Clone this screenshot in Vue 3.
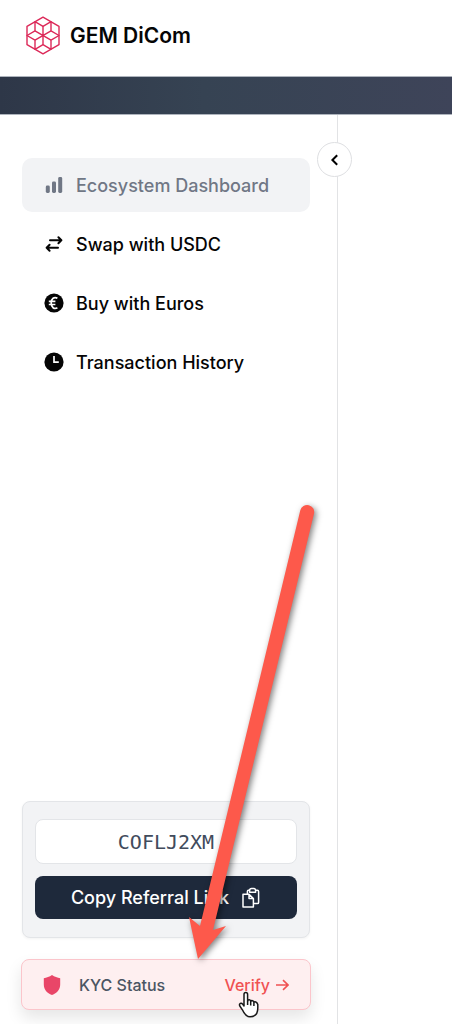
<script setup>
import { ref } from 'vue'

const code = ref('COFLJ2XM')
const collapsed = ref(false)

const items = [
  { label: 'Ecosystem Dashboard', icon: 'bars', active: true },
  { label: 'Swap with USDC', icon: 'swap' },
  { label: 'Buy with Euros', icon: 'euro' },
  { label: 'Transaction History', icon: 'clock' },
]

function copyLink() {
  navigator.clipboard?.writeText(code.value)
}
</script>

<template>
  <div class="page">
    <header class="header">
      <svg class="logo" viewBox="-17 -19.5 34 39" aria-hidden="true">
        <path d="M0-18.4 16-9.2V9.2L0 18.4-16 9.2V-9.2Z" />
        <path d="M0-9.2V9.2M-8-4.6 8 4.6M8-4.6-8 4.6" />
        <path d="M-8-13.8 0-9.2 8-13.8V-4.6L16 0 8 4.6V13.8L0 9.2-8 13.8V4.6L-16 0-8-4.6Z" />
      </svg>
      <h1 class="brand">GEM DiCom</h1>
    </header>
    <div class="banner"></div>

    <div class="body">
      <aside class="sidebar">
        <button
          class="toggle"
          type="button"
          aria-label="Collapse sidebar"
          :aria-expanded="!collapsed"
          @click="collapsed = !collapsed"
        >
          <svg viewBox="0 0 12 12" aria-hidden="true"><path d="M8.2 1.2 3.4 6l4.8 4.8" /></svg>
        </button>

        <nav class="nav">
          <a
            v-for="item in items"
            :key="item.label"
            href="#"
            class="nav-item"
            :class="{ active: item.active }"
          >
            <svg v-if="item.icon === 'bars'" viewBox="0 0 20 20" aria-hidden="true">
              <rect x="1.8" y="10.6" width="4" height="7.4" rx="1.4" />
              <rect x="8" y="6.6" width="4" height="11.4" rx="1.4" />
              <rect x="14.2" y="2" width="4" height="16" rx="1.4" />
            </svg>
            <svg v-else-if="item.icon === 'swap'" class="line" viewBox="0 0 20 20" aria-hidden="true">
              <path d="M6 6.2H17.4M14.4 3.2 17.4 6.2 14.4 9.2M14 13.8H2.6M5.6 10.8 2.6 13.8 5.6 16.8" />
            </svg>
            <svg v-else-if="item.icon === 'euro'" viewBox="0 0 20 20" aria-hidden="true">
              <circle cx="10" cy="10" r="9.6" />
              <path class="cut" d="M13.4 5.2C10.2 3.4 7.2 5.6 7.2 10s3 6.6 6.2 4.8M4.8 8.4H11.4M4.8 11.5H11.4" />
            </svg>
            <svg v-else viewBox="0 0 20 20" aria-hidden="true">
              <circle cx="10" cy="10" r="9.6" />
              <path class="cut" d="M10 4V10.2H14.8" />
            </svg>
            <span>{{ item.label }}</span>
          </a>
        </nav>

        <div class="bottom">
          <section class="referral">
            <input class="code" v-model="code" aria-label="Referral code" readonly />
            <button class="copy" type="button" @click="copyLink">
              Copy Referral Link
              <svg viewBox="0 0 20 22" aria-hidden="true">
                <path d="M2 7.2H8L12.4 11.6V20H2ZM8 7.2V11.6H12.4" />
                <path d="M6.4 7V4.2Q6.4 3.2 7.4 3.2H8.6M14.6 3.2H16.4Q17.6 3.2 17.6 4.4V15.4Q17.6 16.6 16.4 16.6H12.6" />
                <path d="M8.6 5.2V3.6Q8.6 1.6 10.6 1.6H12.6Q14.6 1.6 14.6 3.6V5.2Z" />
              </svg>
            </button>
          </section>

          <section class="kyc">
            <svg class="shield" viewBox="0 0 18 20" aria-hidden="true">
              <path d="M9 0C11.5 1.8 14.5 2.6 17.2 3.2V9.5C17.2 14.5 14 18.3 9 20 4 18.3.8 14.5.8 9.5V3.2C3.5 2.6 6.5 1.8 9 0Z" />
            </svg>
            <span class="kyc-label">KYC Status</span>
            <a class="verify" href="#">
              Verify
              <svg viewBox="0 0 14 14" aria-hidden="true"><path d="M1 7H13M8 2.2 13 7 8 11.8" /></svg>
            </a>
          </section>

          <svg class="pointer-arrow" viewBox="0 0 150 470" aria-hidden="true">
            <path d="M120.3 18.3A7 7 0 0 1 134 21.7L33 438 46 434 18 467 9 425 20 434Z" />
          </svg>
          <svg class="hand" viewBox="0 0 22 28" aria-hidden="true">
            <path d="M6 15V3.4Q6 1.4 7.8 1.4T9.6 3.4V10Q10 8.6 11.3 8.8T12.7 10.4Q13.2 9.4 14.5 9.7T15.9 11.3Q16.5 10.6 17.8 11T19.8 13.4V17Q19.8 25.8 12 25.8C8 25.8 6 22.4 4.4 18.8L1.8 15Q1 13.4 2.2 12.5 3.6 11.8 4.8 13.4Z" />
            <path d="M9.6 10V14M12.7 10.4V14.4M15.9 11.3V15" />
          </svg>
        </div>
      </aside>
      <main class="content"></main>
    </div>
  </div>
</template>

<style>
body {
  margin: 0;
  background: #fff;
}
</style>

<style scoped>
.page {
  display: flex;
  flex-direction: column;
  box-sizing: border-box;
  min-height: 100vh;
  font-family: Inter, "Liberation Sans", sans-serif;
  color: #050505;
}

.header {
  display: flex;
  align-items: center;
  gap: 10px;
  padding: 16px 26px 21px;
}

.logo {
  width: 34px;
  height: 39px;
  fill: none;
  stroke: #dc2858;
  stroke-width: 1.4;
  stroke-linejoin: round;
}

.brand {
  margin: 0;
  font-size: 21px;
  line-height: 33px;
  font-weight: 600;
}

.banner {
  box-sizing: border-box;
  height: 39px;
  border-top: 1px solid #aeb4bd;
  border-bottom: 1px solid #aeb4bd;
  background: linear-gradient(90deg, #2e3748, #364353 45%, #3e4459);
}

.body {
  display: flex;
  flex: 1;
}

.sidebar {
  position: relative;
  display: flex;
  flex-direction: column;
  justify-content: space-between;
  box-sizing: border-box;
  width: 338px;
  padding: 43px 27px 14px 22px;
  border-right: 1px solid #e2e3e5;
}

.toggle {
  position: absolute;
  top: 27px;
  right: -15px;
  display: grid;
  place-items: center;
  width: 35px;
  height: 35px;
  padding: 0;
  border: 1px solid #dedfe2;
  border-radius: 50%;
  background: #fff;
}

.toggle svg {
  width: 12px;
  height: 12px;
  fill: none;
  stroke: #000;
  stroke-width: 2;
}

.nav {
  display: flex;
  flex-direction: column;
  gap: 5px;
}

.nav-item {
  display: flex;
  align-items: center;
  gap: 12px;
  height: 54px;
  padding: 0 22px;
  border-radius: 10px;
  color: #050505;
  font-size: 18px;
  font-weight: 500;
  white-space: nowrap;
  text-decoration: none;
}

.nav-item.active {
  background: #f2f3f5;
  color: #707785;
}

.nav-item svg {
  width: 20px;
  height: 20px;
  fill: currentColor;
}

.nav-item .line {
  fill: none;
  stroke: currentColor;
  stroke-width: 2;
  stroke-linecap: round;
  stroke-linejoin: round;
}

.nav-item .cut {
  fill: none;
  stroke: #fff;
  stroke-width: 1.7;
}

.bottom {
  position: relative;
  display: flex;
  flex-direction: column;
  gap: 21px;
}

.referral {
  display: flex;
  flex-direction: column;
  gap: 12px;
  padding: 17px 12px 18px;
  border: 1px solid #e3e5e8;
  border-radius: 8px;
  background: #f2f3f5;
  box-shadow: 0 1px 3px #0000000d;
}

.code {
  box-sizing: border-box;
  width: 100%;
  height: 45px;
  padding: 0;
  border: 1px solid #e3e5e8;
  border-radius: 8px;
  background: #fff;
  color: #414b5c;
  font-family: "DejaVu Sans Mono", monospace;
  font-size: 20px;
  text-align: center;
}

.copy {
  display: flex;
  align-items: center;
  justify-content: center;
  gap: 12px;
  height: 43px;
  padding: 0;
  border: 0;
  border-radius: 8px;
  background: #1e293b;
  color: #fff;
  font-family: inherit;
  font-size: 18px;
  font-weight: 500;
}

.copy svg {
  width: 20px;
  height: 22px;
  fill: none;
  stroke: #fff;
  stroke-width: 1.5;
  stroke-linejoin: round;
}

.kyc {
  display: flex;
  align-items: center;
  box-sizing: border-box;
  height: 51px;
  margin: 0 -1px;
  padding: 0 21px;
  border: 1px solid #fbc5cb;
  border-radius: 8px;
  background: #feeff0;
  box-shadow: 0 8px 16px #0000001a;
  font-size: 16px;
  font-weight: 500;
}

.shield {
  width: 18px;
  height: 20px;
  fill: #e94668;
}

.kyc-label {
  margin-left: 18px;
  color: #4b5563;
}

.verify {
  display: flex;
  align-items: center;
  gap: 5px;
  margin-left: auto;
  color: #f05252;
  text-decoration: none;
}

.verify svg {
  width: 14px;
  height: 14px;
  fill: none;
  stroke: currentColor;
  stroke-width: 1.6;
}

.pointer-arrow {
  position: absolute;
  right: -20px;
  bottom: 48px;
  width: 150px;
  height: 470px;
  overflow: visible;
  fill: #fd594b;
  filter: drop-shadow(2px 2px 3px #00000080);
  pointer-events: none;
}

.hand {
  position: absolute;
  right: 50px;
  bottom: -9px;
  width: 22px;
  height: 28px;
  fill: #fff;
  stroke: #181818;
  stroke-width: 1.5;
  stroke-linejoin: round;
  pointer-events: none;
}

.content {
  flex: 1;
}
</style>
